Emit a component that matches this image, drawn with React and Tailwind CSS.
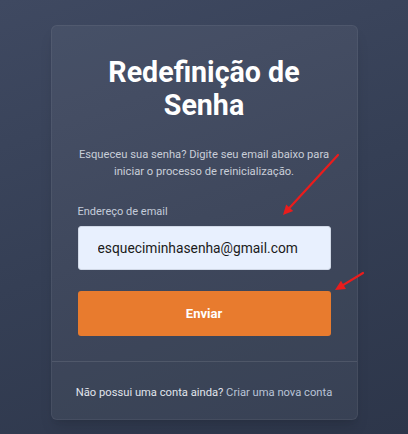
import React, { useState } from "react";

const Arrow = ({ x1, y1, x2, y2 }) => {
    const a = Math.atan2(y2 - y1, x2 - x1);
    const l = 11;
    const w = 0.45;
    const p1 = [x2 - l * Math.cos(a - w), y2 - l * Math.sin(a - w)];
    const p2 = [x2 - l * Math.cos(a + w), y2 - l * Math.sin(a + w)];
    return (
        <g>
            <line x1={x1} y1={y1} x2={x2 - 5 * Math.cos(a)} y2={y2 - 5 * Math.sin(a)} stroke="#ea1c1c" strokeWidth="2.2" strokeLinecap="round" />
            <polygon points={`${x2},${y2} ${p1[0]},${p1[1]} ${p2[0]},${p2[1]}`} fill="#ea1c1c" />
        </g>
    );
};

const App = () => {
    const [email, setEmail] = useState('esqueciminhasenha@gmail.com');

    return (
        <div className="relative w-[408px] h-[434px] overflow-hidden bg-[linear-gradient(160deg,#3f4961_0%,#353f55_50%,#2d364a_100%)] font-['Roboto',sans-serif] pt-[25px]">
            <div className="mx-auto w-[307px] rounded-md bg-white/[0.05] border border-white/[0.06] shadow-lg">
                <div className="px-[26px] pt-[30px] pb-[25px]">
                    <h1 className="text-center text-white font-bold text-[28.6px] leading-[33px]">Redefinição de Senha</h1>
                    <p className="mt-[24px] text-center text-[11.2px] leading-[17px] text-[#c9ced8]">
                        Esqueceu sua senha? Digite seu email abaixo para iniciar o processo de reinicialização.
                    </p>
                    <form onSubmit={(e) => e.preventDefault()} className="mt-[24px]">
                        <label className="block text-[11px] leading-[16px] text-[#c4ccda]">Endereço de email</label>
                        <div className="mt-[6px] h-[44px] rounded-[3px] bg-[#e8f0fe] border border-[#d0d8e6] flex items-center pl-[19px]">
                            <input
                                value={email}
                                onChange={(e) => setEmail(e.target.value)}
                                className="bg-transparent outline-none text-[13.8px] text-[#1b1b1b] w-full"
                            />
                        </div>
                        <button type="submit" className="mt-[21px] w-full h-[45px] rounded-[3px] bg-[#e87b2e] text-white font-bold text-[13px]">Enviar</button>
                    </form>
                </div>
                <div className="border-t border-white/[0.1] pt-[22px] pb-[18px] text-center text-[11.2px] leading-[17px]">
                    <span className="text-[#e0e4ec]">Não possui uma conta ainda? </span>
                    <a href="#" className="text-[#b9c3d6]">Criar uma nova conta</a>
                </div>
            </div>
            <svg className="absolute inset-0 pointer-events-none" width="408" height="434">
                <Arrow x1={338} y1={155} x2={283} y2={215} />
                <Arrow x1={363} y1={273} x2={335} y2={290} />
            </svg>
        </div>
    );
};

export default App;
